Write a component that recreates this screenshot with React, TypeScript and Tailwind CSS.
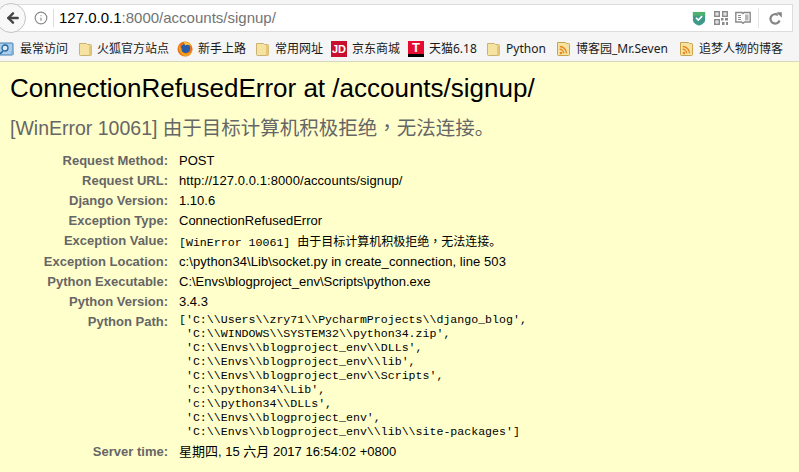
import React from 'react';
import { ArrowLeft, Info } from 'lucide-react';

const cjk = "font-['Liberation_Sans','Noto_Sans_CJK_SC',sans-serif]";

const Folder = () => (
  <svg width="15" height="16" viewBox="0 0 15 16" className="shrink-0">
    <path d="M1.5 2.5h7l1 1h3a1 1 0 0 1 1 1v9a1 1 0 0 1-1 1h-10a1 1 0 0 1-1-1z" fill="#f6e3a1" stroke="#c9b274" />
    <path d="M11 4v10.5h1.5a1 1 0 0 0 1-1V5z" fill="#e5c777" />
  </svg>
);

const Rss = () => (
  <svg width="15" height="16" viewBox="0 0 15 16" className="shrink-0">
    <path d="M1.5 1.5h8l1 1h2a1 1 0 0 1 1 1v10a1 1 0 0 1-1 1h-10a1 1 0 0 1-1-1z" fill="#f6e3a1" stroke="#c9a24e" />
    <circle cx="5" cy="12" r="1.3" fill="#e8861c" />
    <path d="M3.7 8.3a4 4 0 0 1 4 4M3.7 5.5a6.8 6.8 0 0 1 6.8 6.8" fill="none" stroke="#e8861c" strokeWidth="1.4" />
  </svg>
);

const Visited = () => (
  <svg width="15" height="16" viewBox="0 0 15 16" className="shrink-0">
    <rect x="-2" y="2" width="15" height="12" rx="1" fill="#a9cdea" stroke="#3f7fb5" />
    <circle cx="5" cy="7" r="3" fill="#dcecf8" stroke="#24669e" strokeWidth="1.3" />
    <path d="M3 10l-3 3" stroke="#24669e" strokeWidth="1.6" />
    <rect x="11" y="10" width="3" height="4" fill="#7fb0d8" />
  </svg>
);

const FirefoxIcon = () => (
  <svg width="16" height="16" viewBox="0 0 16 16" className="shrink-0">
    <circle cx="8" cy="8" r="7.5" fill="#e8721c" />
    <circle cx="8.5" cy="7.5" r="4.6" fill="#2a5ca8" />
    <path d="M2 3.5C1 8 3 14.5 8.5 15.3 13 15.5 15.5 11.5 15.3 8c-.8 3-3 4.6-5.6 4.6C6.3 12.6 4 10 4.6 7.4 3.4 6.8 2.6 5 2 3.5z" fill="#f0a020" />
    <path d="M7 1c2.5-.5 6 .8 7.5 4C12.5 3.5 10 3.4 8 4.5z" fill="#f7c33a" />
  </svg>
);

const JdIcon = () => (
  <span className="w-4 h-4 shrink-0 bg-[#c8102e] text-white text-[11px] leading-4 font-bold text-center font-['Liberation_Sans',sans-serif]">JD</span>
);

const TmallIcon = () => (
  <span className="w-4 h-4 shrink-0 flex flex-col bg-[#e60b30]">
    <span className="h-[13px] text-white text-[13px] leading-[13px] font-bold text-center font-['Liberation_Sans',sans-serif]">T</span>
    <span className="h-[3px] bg-black" />
  </span>
);

const Shield = () => (
  <svg width="14" height="15" viewBox="0 0 14 16">
    <path d="M0.5 1h13v8.5C13.5 12.5 10 14.5 7 15.5 4 14.5.5 12.5.5 9.5z" fill="#3d9a8b" />
    <path d="M0.5 1h13v4H.5z" fill="#4cb26e" />
    <path d="M3.8 7.2l2.4 2.4 4.2-4.200" fill="none" stroke="#fff" strokeWidth="1.8" />
  </svg>
);

const Qr = () => (
  <svg width="14" height="14" viewBox="0 0 14 14" fill="#8a8a8a">
    <path fillRule="evenodd" d="M0 0h6v6H0zM1.5 1.5v3h3v-3zM8 0h6v6H8zM9.5 1.5v3h3v-3zM0 8h6v6H0zM1.5 9.5v3h3v-3z" />
    <rect x="2.5" y="2.5" width="1" height="1" />
    <rect x="10.5" y="2.5" width="1" height="1" />
    <rect x="2.5" y="10.5" width="1" height="1" />
    <rect x="7" y="7" width="2.5" height="2.5" />
    <rect x="11" y="7" width="3" height="2.5" />
    <rect x="8" y="11" width="2.5" height="3" />
    <rect x="12" y="11" width="2" height="3" />
  </svg>
);

const Reader = () => (
  <svg width="16" height="14" viewBox="0 0 16 14" fill="none" stroke="#8a8a8a">
    <path d="M.8 1.5H7l1 1 1-1h6.200V11H9.500L8 12.300 6.500 11H.8z" strokeWidth="1.4" />
    <path d="M3 4.500h3M3 6.500h3M3 8.500h3" strokeWidth="1" />
    <path d="M10 3.500h3.500v6H10z" fill="#b5b5b5" stroke="none" />
  </svg>
);

const Reload = () => (
  <svg width="13" height="13" viewBox="0 0 13 13" className="ml-[10px] mr-[10px]">
    <path d="M10.6 8.500A4.700 4.700 0 1 1 9 3.100" fill="none" stroke="#858585" strokeWidth="2.2" />
    <path d="M7.500 0.300L12.800 0.300V5.700z" fill="#858585" />
  </svg>
);

const BOOKMARKS: { icon: React.ReactNode; label: string; cls: string }[] = [
  { icon: <Visited />, label: '最常访问', cls: 'w-[78px] gap-[5px]' },
  { icon: <Folder />, label: '火狐官方站点', cls: 'w-[99px] gap-[4px]' },
  { icon: <FirefoxIcon />, label: '新手上路', cls: 'w-[78px] gap-[5px]' },
  { icon: <Folder />, label: '常用网址', cls: 'w-[76px] gap-[5px]' },
  { icon: <JdIcon />, label: '京东商城', cls: 'w-[77px] gap-[5px]' },
  { icon: <TmallIcon />, label: '天猫6.18', cls: 'w-[78px] gap-[5px]' },
  { icon: <Folder />, label: 'Python', cls: 'w-[70px] gap-[5px]' },
  { icon: <Rss />, label: '博客园_Mr.Seven', cls: 'w-[123px] gap-[5px]' },
  { icon: <Rss />, label: '追梦人物的博客', cls: 'w-[110px] gap-[5px]' },
];

const META: { label: string; value: React.ReactNode; cls: string }[] = [
  { label: 'Request Method:', value: 'POST', cls: 'h-5' },
  { label: 'Request URL:', value: <span className="tracking-[0.08px]">http://127.0.0.1:8000/accounts/signup/</span>, cls: 'h-5' },
  { label: 'Django Version:', value: '1.10.6', cls: 'h-5' },
  { label: 'Exception Type:', value: 'ConnectionRefusedError', cls: 'h-5' },
  {
    label: 'Exception Value:',
    value: <span><span className="font-['Liberation_Mono',monospace] text-[11.6px]">[WinError 10061] </span><span className="text-[12px]">由于目标计算机积极拒绝<span className="font-['Noto_Sans_CJK_TC',sans-serif]">，</span>无法连接。</span></span>,
    cls: 'h-[21px]',
  },
  { label: 'Exception Location:', value: <span className="tracking-[0.07px]">c:\python34\Lib\socket.py in create_connection, line 503</span>, cls: 'h-5' },
  { label: 'Python Executable:', value: 'C:\\Envs\\blogproject_env\\Scripts\\python.exe', cls: 'h-5' },
  { label: 'Python Version:', value: '3.4.3', cls: 'h-5' },
];

const PY_PATH = `['C:\\\\Users\\\\zry71\\\\PycharmProjects\\\\django_blog',
 'C:\\\\WINDOWS\\\\SYSTEM32\\\\python34.zip',
 'C:\\\\Envs\\\\blogproject_env\\\\DLLs',
 'C:\\\\Envs\\\\blogproject_env\\\\lib',
 'C:\\\\Envs\\\\blogproject_env\\\\Scripts',
 'c:\\\\python34\\\\Lib',
 'c:\\\\python34\\\\DLLs',
 'C:\\\\Envs\\\\blogproject_env',
 'C:\\\\Envs\\\\blogproject_env\\\\lib\\\\site-packages']`;

const Row = ({ label, cls, children }: { label: string; cls: string; children: React.ReactNode }) => (
  <div className={`flex ${cls}`}>
    <div className="w-[168px] text-right font-bold text-[#666] text-[13px] leading-5 whitespace-nowrap">{label}</div>
    <div className="ml-[11px] text-[13px] leading-5 text-black whitespace-nowrap">{children}</div>
  </div>
);

const App: React.FC = () => {
  return (
    <div className={`w-[799px] h-[472px] overflow-hidden flex flex-col bg-[#ffffcc] ${cjk}`}>
      {/* url bar */}
      <div className="h-[33px] bg-[#f5f5f5] flex items-start relative">
        <div className="w-full h-[28px] mt-[4px] ml-[12px] mr-[6px] bg-white border border-[#dcdcdc] flex items-center">
          <div className="w-[20px]" />
          <Info size={14} className="text-[#8a8a8a] ml-[1px]" />
          <div className="h-[18px] w-px bg-[#ddd] ml-[5px]" />
          <div className="ml-[5px] text-[15px] text-[#737373] whitespace-nowrap font-['Liberation_Sans',sans-serif]">
            <span className="text-black">127.0.0.1</span>:8000/accounts/signup/
          </div>
          <div className="ml-auto flex items-center">
            <Shield />
            <div className="ml-[8px] flex"><Qr /></div>
            <div className="ml-[7px] flex"><Reader /></div>
            <div className="h-[20px] w-px bg-[#e4e4e4] ml-[7px]" />
            <Reload />
          </div>
        </div>
        <div className="absolute left-[-4px] top-[3px] w-[30px] h-[30px] rounded-full bg-[#f8f8f8] border border-[#c4c4c4] flex items-center justify-center">
          <ArrowLeft size={16} strokeWidth={3.6} className="text-[#444] ml-[3px]" />
        </div>
      </div>

      {/* bookmarks */}
      <div className="h-[29px] bg-[#f5f5f5] border-b border-[#d8d8c0] flex items-center overflow-hidden pt-[4px] font-['Noto_Sans','Noto_Sans_CJK_SC',sans-serif]">
        {BOOKMARKS.map((b, i) => (
          <div key={i} className={`flex items-center shrink-0 ${b.cls}`}>
            {b.icon}
            <span className="text-[12px] text-[#1a1a1a] whitespace-nowrap">{b.label}</span>
          </div>
        ))}
      </div>

      {/* error summary */}
      <div className="pl-[10px] pt-[10px]">
        <h1 className="text-[26px] leading-[32px] text-black whitespace-nowrap">ConnectionRefusedError at /accounts/signup/</h1>
        <div className="mt-[10px] text-[19.5px] leading-[26px] text-[#666] whitespace-nowrap">[WinError 10061] 由于目标计算机积极拒绝<span className="font-['Noto_Sans_CJK_TC',sans-serif]">，</span>无法连接。</div>
      </div>

      <div className="mt-[10px]">
        {META.map(m => (
          <Row key={m.label} label={m.label} cls={m.cls}>{m.value}</Row>
        ))}
        <div className="flex">
          <div className="w-[168px] text-right font-bold text-[#666] text-[13px] leading-5 whitespace-nowrap">Python Path:</div>
          <pre className="ml-[11px] mt-[1px] font-['Liberation_Mono',monospace] text-[11.6px] leading-[14px] text-black">{PY_PATH}</pre>
        </div>
        <div className="mt-[3px]">
          <Row label="Server time:" cls="h-5">星期四, 15 六月 2017 16:54:02 +0800</Row>
        </div>
      </div>
    </div>
  );
};

export default App;
